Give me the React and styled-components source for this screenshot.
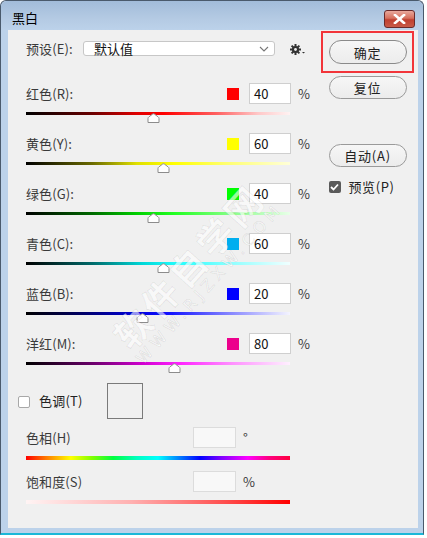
import React from "react";
import styled, { createGlobalStyle } from "styled-components";

const GlobalStyle = createGlobalStyle`
  html, body {
    margin: 0;
    padding: 0;
    background: #ffffff;
  }
  body {
    font-family: "Noto Sans CJK SC", "Noto Sans", sans-serif;
    font-size: 13px;
    color: #333;
  }
`;

const channels = [
  { label: "红色", key: "R", value: 40, swatch: "#ff0000",
    grad: "linear-gradient(to right, #000 0%, #6a0000 25%, #e00000 42%, #ff0000 52%, #ff6060 72%, #ffc8c8 88%, #fff2f2 100%)" },
  { label: "黄色", key: "Y", value: 60, swatch: "#ffff00",
    grad: "linear-gradient(to right, #000 0%, #6a6a00 25%, #e0e000 42%, #ffff00 56%, #ffff70 76%, #ffffd8 100%)" },
  { label: "绿色", key: "G", value: 40, swatch: "#00ff00",
    grad: "linear-gradient(to right, #000 0%, #006a00 25%, #00d000 42%, #22ff22 56%, #88ff88 78%, #e8ffe8 100%)" },
  { label: "青色", key: "C", value: 60, swatch: "#00aeef",
    grad: "linear-gradient(to right, #000 0%, #006a6a 25%, #00d8d8 44%, #22ffff 58%, #90ffff 78%, #f0ffff 100%)" },
  { label: "蓝色", key: "B", value: 20, swatch: "#0000ff",
    grad: "linear-gradient(to right, #000 0%, #00006a 22%, #0000e0 42%, #1010ff 54%, #8080ff 76%, #f4f4ff 100%)" },
  { label: "洋红", key: "M", value: 80, swatch: "#ec008c",
    grad: "linear-gradient(to right, #000 0%, #6a006a 25%, #d000d0 44%, #ff22ff 58%, #ff90ff 78%, #fff0ff 100%)" },
];

function App() {
  return (
    <>
      <GlobalStyle />
      <Window>
        <TitleBar>
          <Title>黑白</Title>
          <CloseButton>
            <svg width="13" height="10" viewBox="0 0 13 10">
              <path d="M2 1 L11 9 M11 1 L2 9" stroke="#fff" strokeWidth="2.6" strokeLinecap="square" />
            </svg>
          </CloseButton>
        </TitleBar>
        <Body>
          <Left>
            <PresetRow>
              <PresetLabel>预设(E):</PresetLabel>
              <Select>
                <span>默认值</span>
                <svg width="10" height="6" viewBox="0 0 10 6">
                  <path d="M1 1 L5 5 L9 1" fill="none" stroke="#777" strokeWidth="1.1" />
                </svg>
              </Select>
              <Gear>
                <svg width="16" height="12" viewBox="0 0 16 12">
                  <g fill="#333">
                    <circle cx="5.5" cy="5.5" r="3.6" />
                    <rect x="4.5" y="0" width="2" height="11" />
                    <rect x="0" y="4.5" width="11" height="2" />
                    <rect x="4.5" y="0" width="2" height="11" transform="rotate(45 5.5 5.5)" />
                    <rect x="4.5" y="0" width="2" height="11" transform="rotate(-45 5.5 5.5)" />
                    <path d="M12 8 L15 8 L13.5 9.6 Z" />
                  </g>
                  <circle cx="5.5" cy="5.5" r="1.4" fill="#f0f0f0" />
                </svg>
              </Gear>
            </PresetRow>

            {channels.map((c) => (
              <ChannelRow key={c.key}>
                <RowHead>
                  <Label>{c.label}({c.key}):</Label>
                  <Swatch $color={c.swatch} />
                  <NumBox>{c.value}</NumBox>
                  <Unit>%</Unit>
                </RowHead>
                <Track $bg={c.grad}>
                  <Thumb style={{ left: `${((c.value + 200) / 500) * 264 - 6}px` }}>
                    <svg width="13" height="10" viewBox="0 0 13 10">
                      <path d="M1 9.5 L1 5.5 Q1 4.5 2 3.8 L5.6 1.1 Q6.5 0.5 7.4 1.1 L11 3.8 Q12 4.5 12 5.5 L12 9.5 Z" fill="#fff" stroke="#8c8c8c" strokeWidth="1" strokeLinejoin="round" />
                    </svg>
                  </Thumb>
                </Track>
              </ChannelRow>
            ))}

            <ToneRow>
              <Check />
              <ToneLabel>色调(T)</ToneLabel>
              <ToneSwatch />
            </ToneRow>

            <AdjustRow $top={9}>
              <RowHead>
                <Label>色相(H)</Label>
                <FaintBox />
                <FaintUnit>°</FaintUnit>
              </RowHead>
              <FlatTrack $bg="linear-gradient(to right, #ff0000 0%, #ff8000 8%, #ffff00 17%, #80ff00 25%, #00ff40 33%, #00ffc0 42%, #00ffff 50%, #0080ff 58%, #0000ff 66%, #8000ff 74%, #ff00ff 84%, #ff0080 92%, #ff0040 100%)" />
            </AdjustRow>

            <AdjustRow $top={11}>
              <RowHead>
                <Label>饱和度(S)</Label>
                <FaintBox />
                <FaintUnit>%</FaintUnit>
              </RowHead>
              <FlatTrack $bg="linear-gradient(to right, #fff4f4 0%, #ffb0b0 40%, #ff5050 75%, #ff0000 100%)" />
            </AdjustRow>
          </Left>

          <Right>
            <Highlight>
              <PillButton>确定</PillButton>
            </Highlight>
            <PillButton>复位</PillButton>
            <Spacer />
            <PillButton>自动(A)</PillButton>
            <PreviewRow>
              <CheckedBox>
                <svg width="9" height="8" viewBox="0 0 9 8">
                  <path d="M1 4 L3.5 6.5 L8 1.5" fill="none" stroke="#fff" strokeWidth="1.8" />
                </svg>
              </CheckedBox>
              <span>预览(P)</span>
            </PreviewRow>
          </Right>

          <Watermark>
            <Big>软件自学网</Big>
            <Small>WWW.RJZXW.COM</Small>
          </Watermark>
        </Body>
      </Window>
    </>
  );
}

export default App;

const Window = styled.div`
  width: 424px;
  height: 535px;
  background: #bcd2ea;
  border: 1px solid #4a5a6c;
  border-bottom: 2px solid #1bb8d8;
  border-radius: 6px 6px 0 0;
  display: flex;
  flex-direction: column;
  box-sizing: border-box;
`;

const TitleBar = styled.div`
  height: 29px;
  display: flex;
  align-items: center;
  justify-content: space-between;
  padding: 0 8px 0 11px;
  background: linear-gradient(to bottom, #a2bcda 0%, #b4cae3 60%, #bcd2ea 100%);
  border-radius: 6px 6px 0 0;
`;

const Title = styled.div`
  font-size: 13px;
  color: #000;
  margin-top: 4px;
`;

const CloseButton = styled.div`
  width: 29px;
  height: 16px;
  margin-top: 6px;
  border: 1px solid #6a2a2a;
  border-radius: 3px;
  background: linear-gradient(to bottom, #e8a89c 0%, #d6705e 45%, #c04030 55%, #c85a48 100%);
  display: flex;
  align-items: center;
  justify-content: center;
`;

const Body = styled.div`
  position: relative;
  flex: 1;
  margin: 0 5px 5px 7px;
  background: #f0f0f0;
  display: flex;
  overflow: hidden;
`;

const Left = styled.div`
  width: 313px;
  padding: 11px 0 0 18px;
  box-sizing: border-box;
  display: flex;
  flex-direction: column;
`;

const Label = styled.span`
  color: #3a3a3a;
  font-size: 13px;
  letter-spacing: 0.1px;
`;

const PresetLabel = styled(Label)`
  width: 57px;
  flex-shrink: 0;
`;

const PresetRow = styled.div`
  height: 15px;
  display: flex;
  align-items: center;
  margin-bottom: 27px;
`;

const Select = styled.div`
  width: 192px;
  height: 15px;
  box-sizing: border-box;
  border: 1px solid #c7c7c7;
  border-radius: 3px;
  background: #fff;
  display: flex;
  align-items: center;
  justify-content: space-between;
  padding: 0 5px 0 10px;
  color: #111;
  font-size: 13px;
`;

const Gear = styled.div`
  margin-left: 15px;
  display: flex;
  align-items: center;
  margin-top: 2px;
`;

const ChannelRow = styled.div`
  height: 50px;
  display: flex;
  flex-direction: column;
`;

const RowHead = styled.div`
  width: 284px;
  height: 21px;
  display: flex;
  align-items: center;
  position: relative;
`;

const Swatch = styled.div`
  width: 12px;
  height: 12px;
  background: ${(p) => p.$color};
  margin-left: auto;
`;

const NumBox = styled.div`
  width: 42px;
  height: 21px;
  box-sizing: border-box;
  border: 1px solid #cfcfcf;
  background: #fff;
  margin-left: 10px;
  margin-right: 7px;
  padding-left: 4px;
  display: flex;
  align-items: center;
  color: #111;
  font-size: 13px;
`;

const Unit = styled.span`
  width: 12px;
  color: #3a3a3a;
  font-size: 13px;
`;

const Track = styled.div`
  position: relative;
  width: 264px;
  height: 3px;
  margin-top: 8px;
  background: ${(p) => p.$bg};
`;

const Thumb = styled.div`
  position: absolute;
  top: 1px;
  width: 13px;
  height: 10px;
  line-height: 0;
`;

const ToneRow = styled.div`
  height: 35px;
  margin-left: -8px;
  display: flex;
  align-items: center;
`;

const Check = styled.div`
  width: 12px;
  height: 12px;
  box-sizing: border-box;
  border: 1px solid #a8a8a8;
  border-radius: 2px;
  background: #fff;
  margin-top: 2px;
  flex-shrink: 0;
`;

const ToneLabel = styled.span`
  width: 68px;
  margin-left: 9px;
  color: #222;
  font-size: 13px;
  letter-spacing: 0.2px;
  flex-shrink: 0;
`;

const ToneSwatch = styled.div`
  width: 36px;
  height: 36px;
  box-sizing: border-box;
  border: 1px solid #7a7a7a;
`;

const AdjustRow = styled.div`
  display: flex;
  flex-direction: column;
  padding-top: ${(p) => p.$top}px;
`;

const FaintBox = styled.div`
  position: absolute;
  left: 167px;
  width: 43px;
  height: 21px;
  box-sizing: border-box;
  border: 1px solid #dcdcdc;
  background: #f8f8f8;
`;

const FaintUnit = styled.span`
  position: absolute;
  left: 217px;
  color: #3a3a3a;
  font-size: 13px;
`;

const FlatTrack = styled.div`
  width: 264px;
  height: 4px;
  margin-top: 8px;
  background: ${(p) => p.$bg};
`;

const Right = styled.div`
  width: 93px;
  display: flex;
  flex-direction: column;
  align-items: center;
  padding-top: 1px;
`;

const Highlight = styled.div`
  width: 93px;
  height: 42px;
  box-sizing: border-box;
  border: 2px solid #f2353a;
  display: flex;
  align-items: center;
  justify-content: center;
  margin-bottom: 3px;
`;

const PillButton = styled.div`
  width: 78px;
  height: 23px;
  box-sizing: border-box;
  border: 1px solid #9a9a9a;
  border-radius: 12px;
  background: linear-gradient(to bottom, #f6f6f6, #ececec);
  display: flex;
  align-items: center;
  justify-content: center;
  color: #222;
  font-size: 13px;
  letter-spacing: 0.8px;
  flex-shrink: 0;

  ${Highlight} & {
    height: 24px;
    border-color: #8a8a8a;
  }
`;

const Spacer = styled.div`
  height: 45px;
  flex-shrink: 0;
`;

const PreviewRow = styled.div`
  width: 78px;
  display: flex;
  align-items: center;
  gap: 8px;
  margin-top: 10px;
  color: #222;
  font-size: 13px;
  letter-spacing: 0.6px;
`;

const CheckedBox = styled.div`
  width: 12px;
  height: 12px;
  border-radius: 2px;
  background: #5a5a5a;
  display: flex;
  align-items: center;
  justify-content: center;
`;

const Watermark = styled.div`
  position: absolute;
  left: 95px;
  top: 296px;
  transform: rotate(-48deg);
  transform-origin: 0 0;
  pointer-events: none;
  display: flex;
  flex-direction: column;
  align-items: flex-start;
`;

const Big = styled.div`
  height: 44px;
  line-height: 44px;
  font-size: 36px;
  font-weight: 700;
  letter-spacing: 5px;
  color: rgba(255, 255, 255, 0.6);
  -webkit-text-stroke: 1px rgba(0, 0, 0, 0.07);
  white-space: nowrap;
`;

const Small = styled.div`
  margin: -3px 0 0 -2px;
  font-family: "DejaVu Sans", sans-serif;
  font-size: 16px;
  line-height: 20px;
  letter-spacing: 5px;
  color: rgba(255, 255, 255, 0.7);
  -webkit-text-stroke: 1px rgba(0, 0, 0, 0.08);
  white-space: nowrap;
`;
